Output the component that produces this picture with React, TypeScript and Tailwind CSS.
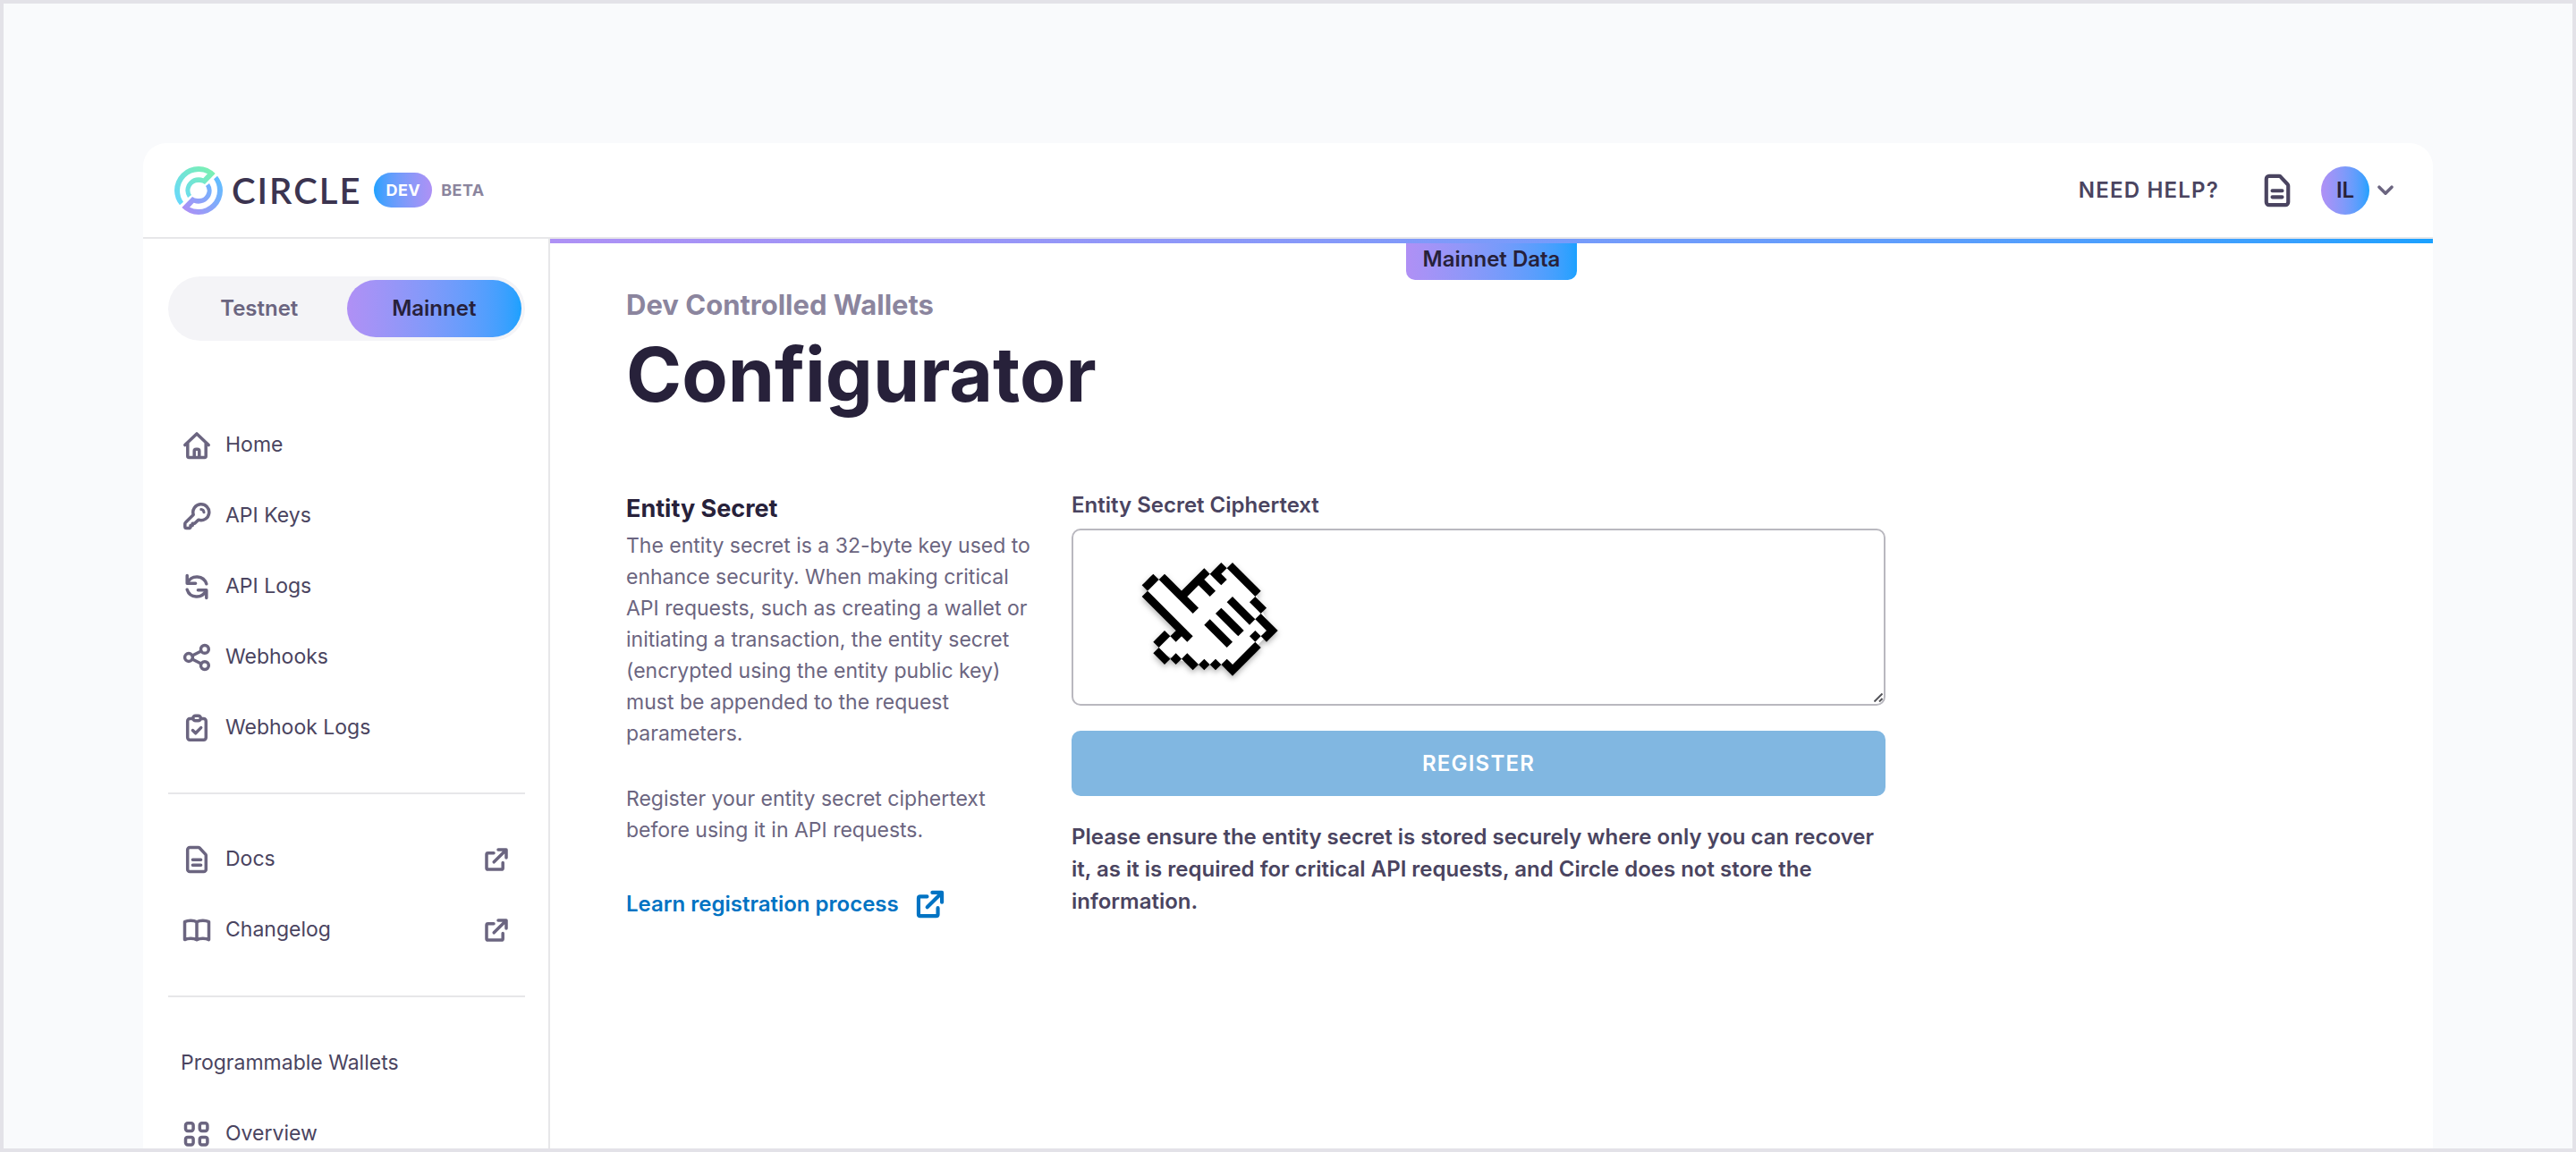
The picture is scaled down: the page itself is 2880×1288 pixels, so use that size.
import type { ReactNode } from 'react';

function Icon({ className = 'size-8', children }: { className?: string; children: ReactNode }) {
  return (
    <svg
      viewBox="0 0 32 32"
      fill="none"
      stroke="currentColor"
      strokeWidth="3.5"
      strokeLinecap="round"
      strokeLinejoin="round"
      aria-hidden="true"
      className={`shrink-0 ${className}`}
    >
      {children}
    </svg>
  );
}

const HomeIcon = () => (
  <Icon>
    <path d="M2.8 15.6 16 2.9l13.2 12.7" />
    <path d="M5.8 14v14a1.4 1.4 0 0 0 1.4 1.4h17.6a1.4 1.4 0 0 0 1.4-1.4V14" />
    <path d="M13.2 28.5v-6.3a2 2 0 0 1 2-2h1.6a2 2 0 0 1 2 2v6.3" />
  </Icon>
);

const KeyIcon = () => (
  <Icon>
    <path d="M17.8 20.2A9 9 0 1 0 12.2 14.4L3.6 23a2.2 2.2 0 0 0-.8 1.6v3.2a1.8 1.8 0 0 0 1.8 1.8h3.2l1.2-1v-2h2.2v-2.3h2.4z" />
    <path d="M20.8 8.6a3.6 3.6 0 0 1 3.2 3.2" strokeWidth="3" />
  </Icon>
);

const SyncIcon = () => (
  <Icon>
    <path d="M5.2 3.4v8.8h9.4" />
    <path d="M5.8 11.4a11.3 11.3 0 0 1 21 1.4" />
    <path d="M26.8 28.6v-8.8h-9.4" />
    <path d="M26.2 20.6a11.3 11.3 0 0 1-21-1.4" />
  </Icon>
);

const ShareIcon = () => (
  <Icon>
    <circle cx="7" cy="16" r="4.4" />
    <circle cx="24.9" cy="6.9" r="4.4" />
    <circle cx="24.9" cy="25.1" r="4.4" />
    <path d="m11 14 9.8-5M11 18l9.8 5" />
  </Icon>
);

const ClipboardIcon = () => (
  <Icon>
    <rect x="5.7" y="5.6" width="20.6" height="23.6" rx="2.6" />
    <rect x="11.8" y="2.2" width="8.6" height="5.6" rx="2.8" fill="#fff" />
    <path d="m11.4 18.6 3.3 3.2 6-6.2" />
  </Icon>
);

const DocIcon = ({ className }: { className?: string }) => (
  <Icon className={className}>
    <path d="M8.3 2.4h9.4a2 2 0 0 1 1.4.6l6.6 7.1a2 2 0 0 1 .6 1.4V27a2.6 2.6 0 0 1-2.6 2.6H8.3A2.6 2.6 0 0 1 5.7 27V5a2.6 2.6 0 0 1 2.6-2.6z" />
    <path d="M11.4 16.2h9.2M11.4 22.2h9.2" />
  </Icon>
);

const BookIcon = () => (
  <Icon>
    <path d="M16 6.8C12.5 4.8 6.2 4.8 2.5 6.6v20c3.7-1.8 10-1.8 13.5.2 3.5-2 9.8-2 13.5-.2v-20C25.8 4.8 19.5 4.8 16 6.8v20" />
  </Icon>
);

const ExternalIcon = ({ className }: { className?: string }) => (
  <Icon className={className}>
    <path d="M13 8.8H6.6A1.6 1.6 0 0 0 5 10.4v15A1.6 1.6 0 0 0 6.6 27h15a1.6 1.6 0 0 0 1.6-1.6V19.5" />
    <path d="M13.2 18.8 26.6 5.4M18 5h9v9" />
  </Icon>
);

const GridIcon = () => (
  <Icon>
    <rect x="3.5" y="3.8" width="8.6" height="8.6" rx="2.4" />
    <rect x="19.3" y="3.8" width="8.6" height="8.6" rx="2.4" />
    <rect x="3.5" y="19.4" width="8.6" height="8.6" rx="2.4" />
    <rect x="19.3" y="19.4" width="8.6" height="8.6" rx="2.4" />
  </Icon>
);

function CircleMark() {
  return (
    <svg viewBox="165 138 162 162" fill="none" aria-hidden="true" className="size-[54px] shrink-0">
      <defs>
        <linearGradient id="mint" gradientUnits="userSpaceOnUse" x1="290" y1="150" x2="180" y2="260">
          <stop stopColor="#7bf0b2" />
          <stop offset="1" stopColor="#68d8fa" />
        </linearGradient>
        <linearGradient id="violet" gradientUnits="userSpaceOnUse" x1="310" y1="180" x2="200" y2="285">
          <stop stopColor="#62bdff" />
          <stop offset="1" stopColor="#ab90f5" />
        </linearGradient>
      </defs>
      <path
        fill="url(#mint)"
        d="M183 268A81 81 0 0 1 165 219A81 81 0 0 1 246 138A81 81 0 0 1 302 162L267 198A28 28 0 0 0 246 192A27 27 0 0 0 222 234L210 243A44 44 0 0 1 202 219A44 44 0 0 1 246 175A44 44 0 0 1 262 178L276 163A63 63 0 0 0 246 156A63 63 0 0 0 183 219A63 63 0 0 0 195 257Z"
      />
      <path
        fill="url(#violet)"
        d="M309 170A81 81 0 0 1 327 219A81 81 0 0 1 246 300A81 81 0 0 1 190 276L225 240A28 28 0 0 0 246 246A27 27 0 0 0 270 204L282 195A44 44 0 0 1 290 219A44 44 0 0 1 246 263A44 44 0 0 1 230 260L216 275A63 63 0 0 0 246 282A63 63 0 0 0 309 219A63 63 0 0 0 297 181Z"
      />
    </svg>
  );
}

function PixelHand() {
  return (
    <svg
      viewBox="210 249 498 420"
      aria-hidden="true"
      className="pointer-events-none absolute top-[31px] left-[72px] h-[140px] w-[166px] drop-shadow-[0_3px_3px_rgba(0,0,0,0.3)]"
    >
      <path
        fill="#fff"
        d="M268 327 306 327 363 384 439 308 496 289 534 289 610 365 629 422 667 498 610 555 534 631 515 612 401 612 287 574 287 536 306 517 382 517 249 384 249 346Z"
      />
      <path
        fill="none"
        stroke="#000"
        strokeWidth="27"
        strokeLinecap="square"
        strokeLinejoin="miter"
        d="M249 346 268 327M306 327 401 422M249 384 382 517M363 498 344 517M306 517 287 536M287 574 306 593M382 593 401 612M515 612 534 631 610 555M629 460 667 498 648 517M610 403 629 422M534 289 610 365M496 289 477 308 496 327M439 308 363 384M420 327 458 365M534 403 591 460M496 441 553 498M458 479 515 536"
      />
      <path
        fill="#000"
        d="m344 574 19 19-19 19-19-19zM439 593l19 19-19 19-19-19zM477 593l19 19-19 19-19-19zM610 498l19 19-19 19-19-19z"
      />
    </svg>
  );
}

function NavItem({ icon, label, external }: { icon: ReactNode; label: string; external?: boolean }) {
  return (
    <li>
      <a href="#" className="flex h-[79px] items-center gap-4 px-4 text-[#6b6580]">
        {icon}
        <span className="flex-1 text-[23px] text-[#4a4460]">{label}</span>
        {external && <ExternalIcon />}
      </a>
    </li>
  );
}

function Header() {
  return (
    <header className="flex h-[107px] items-center justify-between border-b-2 border-[#e7e7e9] pr-11 pl-[35px]">
      <div className="flex items-center">
        <a href="#" className="flex items-center gap-2.5" aria-label="Circle">
          <CircleMark />
          <span className="font-[Lato,sans-serif] text-[40px] leading-none font-semibold tracking-wider text-[#3b3450]">
            CIRCLE
          </span>
        </a>
        <span className="ml-3.5 flex h-[39px] items-center rounded-full bg-linear-to-r from-[#1aa1ff] to-[#ae91f5] px-[13px] text-[18px] font-bold tracking-wide text-white">
          DEV
        </span>
        <span className="ml-2.5 text-[18px] font-bold tracking-wide text-[#8b859e]">BETA</span>
      </div>
      <div className="flex items-center">
        <a href="#" className="text-[24px] font-semibold tracking-wider text-[#4a4460]">
          NEED HELP?
        </a>
        <a href="#" aria-label="Documentation" className="ml-[46px] text-[#4a4460]">
          <DocIcon className="size-[38px]" />
        </a>
        <button type="button" className="ml-[30px] flex items-center gap-[9px]" aria-label="Account menu">
          <span className="flex size-[54px] items-center justify-center rounded-full bg-linear-to-r from-[#b090f5] to-[#1aa1ff] text-[24px] font-semibold text-[#27213a]">
            IL
          </span>
          <svg
            viewBox="0 0 18 12"
            fill="none"
            stroke="#6b6580"
            strokeWidth="3.5"
            strokeLinecap="round"
            strokeLinejoin="round"
            className="h-3 w-[18px]"
          >
            <path d="m2 2.2 7 7 7-7" />
          </svg>
        </button>
      </div>
    </header>
  );
}

function Sidebar() {
  return (
    <aside className="w-[455px] shrink-0 border-r-2 border-[#e7e7e9] pt-[42px] pr-[26px] pl-7">
      <div className="flex h-[72px] rounded-full bg-[#f4f4f7] p-1 text-[24px] font-semibold">
        <button type="button" className="flex-1 rounded-full text-[#6b6580]">
          Testnet
        </button>
        <button
          type="button"
          className="flex-1 rounded-full bg-linear-to-r from-[#b090f5] to-[#1aa1ff] text-[#27213a]"
        >
          Mainnet
        </button>
      </div>
      <nav className="mt-[77px]">
        <ul>
          <NavItem icon={<HomeIcon />} label="Home" />
          <NavItem icon={<KeyIcon />} label="API Keys" />
          <NavItem icon={<SyncIcon />} label="API Logs" />
          <NavItem icon={<ShareIcon />} label="Webhooks" />
          <NavItem icon={<ClipboardIcon />} label="Webhook Logs" />
        </ul>
        <hr className="my-[33px] border-t-2 border-[#e7e7e9]" />
        <ul>
          <NavItem icon={<DocIcon />} label="Docs" external />
          <NavItem icon={<BookIcon />} label="Changelog" external />
        </ul>
        <hr className="my-[34px] border-t-2 border-[#e7e7e9]" />
        <h2 className="flex h-[79px] items-center px-[14px] text-[23px] text-[#4a4460]">Programmable Wallets</h2>
        <ul>
          <NavItem icon={<GridIcon />} label="Overview" />
        </ul>
      </nav>
    </aside>
  );
}

function Configurator() {
  return (
    <main className="min-w-0 flex-1">
      <div className="h-[5px] bg-linear-to-r from-[#ae91f5] to-[#1aa1ff]" />
      <div className="flex justify-center">
        <p className="flex h-[41px] items-center rounded-b-[10px] bg-linear-to-r from-[#b090f5] to-[#1aa1ff] px-[19px] pb-1.5 text-[24px] font-semibold text-[#27213a]">
          Mainnet Data
        </p>
      </div>
      <div className="pt-2 pr-10 pl-[85px]">
        <p className="text-[31px] leading-10 font-bold text-[#8b859e]">Dev Controlled Wallets</p>
        <h1 className="mt-2.5 text-[84px] leading-[96px] font-bold text-[#27213a]">Configurator</h1>
        <div className="mt-20 grid max-w-[1408px] grid-cols-[458px_1fr] gap-10">
          <section className="pt-1">
            <h2 className="text-[27px] leading-9 font-bold text-[#27213a]">Entity Secret</h2>
            <div className="mt-1.5 text-[23px] leading-[35px] text-[#6b6580]">
              <p>
                The entity secret is a 32-byte key used to enhance security. When making critical API requests, such as
                creating a wallet or initiating a transaction, the entity secret (encrypted using the entity public
                key) must be appended to the request parameters.
              </p>
              <p className="mt-[38px]">Register your entity secret ciphertext before using it in API requests.</p>
            </div>
            <a href="#" className="mt-[46px] flex items-center gap-4 text-[24px] font-semibold text-[#0073c3]">
              Learn registration process
              <ExternalIcon className="size-[38px]" />
            </a>
          </section>
          <form>
            <label htmlFor="ciphertext" className="block text-[24px] leading-9 font-semibold text-[#4a4460]">
              Entity Secret Ciphertext
            </label>
            <div className="relative mt-2">
              <textarea
                id="ciphertext"
                className="block h-[198px] w-full resize-none rounded-[10px] border-2 border-[#b9b8bf] bg-white p-4 text-[23px]"
              />
              <PixelHand />
              <svg
                viewBox="0 0 10 10"
                stroke="#55555a"
                strokeWidth="2"
                aria-hidden="true"
                className="pointer-events-none absolute right-[3px] bottom-1 size-2.5"
              >
                <path d="M.5 9.5 9.5.5M6 9.5 9.5 6" />
              </svg>
            </div>
            <button
              type="button"
              className="mt-7 h-[73px] w-full rounded-[10px] bg-[#81b7e1] text-[24px] font-semibold tracking-wider text-white"
            >
              REGISTER
            </button>
            <p className="mt-7 text-[24px] leading-9 font-semibold text-[#4a4460]">
              Please ensure the entity secret is stored securely where only you can recover it, as it is required for
              critical API requests, and Circle does not store the information.
            </p>
          </form>
        </div>
      </div>
    </main>
  );
}

export default function App() {
  return (
    <div className="flex h-screen flex-col overflow-hidden border-4 border-[#e3e2e8] bg-[#f9fafc] px-[156px] pt-[156px] font-[Inter,sans-serif]">
      <div className="flex grow flex-col rounded-t-[26px] bg-white">
        <Header />
        <div className="flex grow">
          <Sidebar />
          <Configurator />
        </div>
      </div>
    </div>
  );
}
